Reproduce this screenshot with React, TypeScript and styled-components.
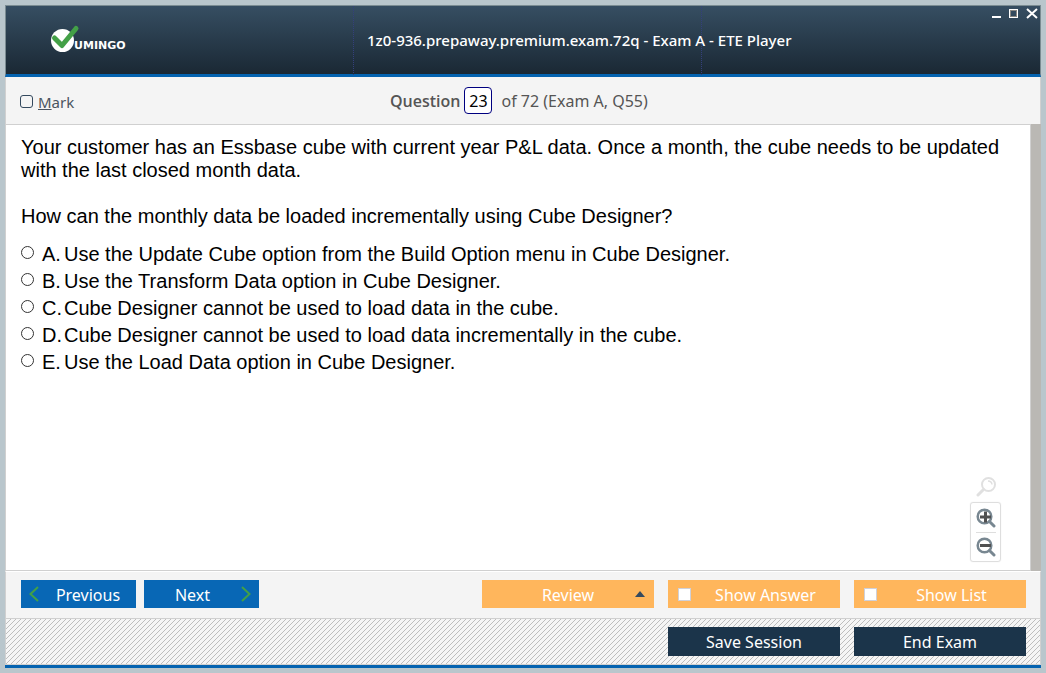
import React, { useState } from "react";
import styled, { createGlobalStyle, css } from "styled-components";

const uiFont = '"Noto Sans", "Open Sans", sans-serif';

const hatchTile = encodeURIComponent(
  '<svg xmlns="http://www.w3.org/2000/svg" width="5" height="5" fill="#bdbdbd" shape-rendering="crispEdges"><path d="M4 0h1v1h-1zM3 1h1v1h-1zM2 2h1v1h-1zM1 3h1v1h-1zM0 4h1v1h-1z"/></svg>'
);

const GlobalStyle = createGlobalStyle`
  *, *::before, *::after { box-sizing: border-box; }
  body { margin: 0; background: #b9c6cc; font-family: ${uiFont}; }
  button, input { font: inherit; margin: 0; }
`;

const Desktop = styled.div`
  display: flex;
  min-height: 100vh;
  padding: 5px;
`;

const Window = styled.div`
  flex: 1;
  min-width: 0;
  display: flex;
  flex-direction: column;
  border-bottom: 3px solid #0463b0;
`;

const TitleBar = styled.header`
  display: grid;
  grid-template-columns: 348px 348px minmax(0, 1fr);
  height: 72px;
  border: 1px solid #7b8c92;
  border-bottom: 3px solid #0463b0;
  background: linear-gradient(#364e62, #1a2834);
`;

const LogoCell = styled.div`
  padding: 18px 0 0 42px;
  border-right: 1px dotted #34407c;
`;

const Title = styled.h1`
  margin: 0;
  padding-left: 13px;
  border-right: 1px dotted #34407c;
  white-space: nowrap;
  font-size: 15px;
  font-weight: 500;
  line-height: 69px;
  color: #fff;
`;

const WindowControls = styled.div`
  display: flex;
  justify-content: flex-end;
  align-items: flex-start;
  gap: 4px;
  padding: 1px 1px 0 0;
`;

const ControlButton = styled.button`
  display: flex;
  padding: 0;
  border: 0;
  background: none;
`;

const InfoBar = styled.div`
  display: grid;
  grid-template-columns: 384px 1fr;
  align-items: center;
  height: 48px;
  border: 1px solid #d0d0d0;
  border-top: 0;
  background: #f4f4f4;
  color: #555;
  font-size: 16px;
`;

const MarkLabel = styled.label`
  display: flex;
  align-items: center;
  gap: 5px;
  padding: 2px 0 0 14px;
  color: #4a5560;
  font-size: 15px;
`;

const MarkBox = styled.input`
  appearance: none;
  width: 13px;
  height: 13px;
  border: 1px solid #34495e;
  border-radius: 3px;
  &:checked { background: #34495e; }
`;

const Position = styled.div`
  display: flex;
  align-items: center;
  gap: 4px;
  white-space: nowrap;
`;

const QuestionLabel = styled.label`
  font-family: "Open Sans", "Noto Sans", sans-serif;
  font-weight: 600;
`;

const NumberInput = styled.input`
  width: 28px;
  height: 27px;
  margin-right: 5px;
  padding: 0;
  border: 1px solid #000080;
  border-radius: 4px;
  background: #fff;
  color: #000;
  text-align: center;
`;

const ContentRow = styled.div`
  flex: 1;
  display: flex;
  border-left: 1px solid #d0d0d0;
`;

const Content = styled.main`
  flex: 1;
  min-width: 0;
  display: flex;
  flex-direction: column;
  justify-content: space-between;
  padding: 11px 29px 8px 15px;
  border-right: 1px solid #d0d0d0;
  border-bottom: 1px solid #d0d0d0;
  background: #fff;
  color: #000;
  font-family: "Liberation Sans", Arial, sans-serif;
  font-size: 20px;
  line-height: 23px;
`;

const ScrollTrack = styled.div`
  width: 10px;
  margin-top: -1px;
  background: #bab8b4;
`;

const Paragraph = styled.p`
  margin: 0 0 23px;
`;

const Choices = styled.fieldset`
  margin: -10px 0 0;
  padding: 0;
  border: 0;
`;

const Choice = styled.label`
  display: grid;
  grid-template-columns: 21px 22px 1fr;
  line-height: 27px;
`;

const Radio = styled.input`
  appearance: none;
  width: 13px;
  height: 13px;
  margin-top: 5px !important;
  border: 1px solid #333;
  border-radius: 50%;
  background: #fff;
  &:checked { background: radial-gradient(#222 40%, #fff 45%); }
`;

const ZoomTools = styled.div`
  align-self: flex-end;
  display: flex;
  flex-direction: column;
  align-items: center;
  gap: 5px;
`;

const ZoomPanel = styled.div`
  display: flex;
  flex-direction: column;
  align-items: center;
  width: 31px;
  border: 1px solid #dedede;
  border-radius: 3px;
  box-shadow: 0 0 1px #ddd;
`;

const ZoomButton = styled.button`
  display: flex;
  align-items: center;
  justify-content: center;
  width: 20px;
  height: 29px;
  padding: 0;
  border: 0;
  background: none;
  & + & { border-top: 1px solid #dedede; }
`;

const Actions = styled.div`
  display: flex;
  gap: 8px;
  height: 48px;
  padding: 8px 14px 0 15px;
  border: 1px solid #d0d0d0;
  border-top: 1px solid #fff;
  background: #f4f4f4;
`;

const Footer = styled.footer`
  display: flex;
  justify-content: flex-end;
  gap: 14px;
  height: 46px;
  padding: 8px 14px 0 15px;
  border: 1px solid #d0d0d0;
  border-top: 0;
  background: #f5f5f5 url("data:image/svg+xml,${hatchTile}");
`;

const buttonBase = css`
  position: relative;
  display: flex;
  align-items: center;
  justify-content: center;
  height: 28px;
  padding: 0;
  border: 0;
  color: #fff;
  font-size: 16px;
  line-height: 30px;
  white-space: nowrap;
`;

const NavButton = styled.button<{ $dir: "back" | "forward" }>`
  ${buttonBase}
  flex-direction: ${(p) => (p.$dir === "back" ? "row" : "row-reverse")};
  justify-content: flex-start;
  width: 115px;
  padding: 0 8px;
  background: #0867b5;
`;

const NavText = styled.span<{ $dir: "back" | "forward" }>`
  flex: 1;
  padding-top: 2px;
  text-align: center;
  ${(p) => (p.$dir === "back" ? "padding-left: 9px;" : "padding-right: 8px;")}
`;

const OptionGroup = styled.div`
  display: flex;
  gap: 14px;
  margin-left: auto;
`;

const OrangeButton = styled.button`
  ${buttonBase}
  width: 172px;
  padding-top: 2px;
  background: #ffb65c;
`;

const OrangeToggle = styled.label`
  ${buttonBase}
  width: 172px;
  padding-left: 10px;
  background: #ffb65c;
`;

const ToggleText = styled.span`
  flex: 1;
  padding-top: 2px;
  text-align: center;
`;

const ToggleBox = styled.input`
  appearance: none;
  width: 13px;
  height: 13px;
  border: 1px solid #d0d0d8;
  background: #fff;
  &:checked { background: #1b344a; }
`;

const Caret = styled.span`
  position: absolute;
  top: 11px;
  right: 9px;
  border: 5px solid transparent;
  border-top: 0;
  border-bottom: 6px solid #34495e;
`;

const DarkButton = styled.button`
  ${buttonBase}
  width: 172px;
  height: 29px;
  background: #1b344a;
`;

const LogoText = styled.text`
  font-family: "DejaVu Sans", sans-serif;
  font-weight: 700;
  font-size: 11px;
  fill: #fff;
`;

const Logo = () => (
  <svg width="84" height="32" viewBox="0 0 84 32" role="img" aria-label="Vumingo">
    <circle cx="14.500" cy="16.500" r="11.500" fill="#fff" />
    <path d="M6.500 14 L14 21.500 L28 4.500" fill="none" stroke="#43a047" strokeWidth="5" strokeLinecap="round" strokeLinejoin="round" />
    <LogoText x="26" y="25">UMINGO</LogoText>
  </svg>
);

const Chevron = ({ dir }: { dir: "back" | "forward" }) => (
  <svg width="10" height="16" viewBox="0 0 10 16" fill="none" stroke="#43a047" strokeWidth="2">
    <path d={dir === "back" ? "M9 1 L1.500 8 L9 15" : "M1 1 L8.500 8 L1 15"} />
  </svg>
);

const Magnifier = ({ sign }: { sign: "plus" | "minus" }) => (
  <svg width="20" height="20" viewBox="0 0 20 20" fill="none">
    <circle cx="8.500" cy="8.500" r="6.800" stroke="#788791" strokeWidth="2.500" />
    <path d="M13.500 13.500 L18 18" stroke="#788791" strokeWidth="3" strokeLinecap="round" />
    <path d={sign === "plus" ? "M4 9 H15 M9.500 3.500 V14.500" : "M4 8.500 H15"} stroke="#505050" strokeWidth="3" />
  </svg>
);

const choices = [
  ["A", "Use the Update Cube option from the Build Option menu in Cube Designer."],
  ["B", "Use the Transform Data option in Cube Designer."],
  ["C", "Cube Designer cannot be used to load data in the cube."],
  ["D", "Cube Designer cannot be used to load data incrementally in the cube."],
  ["E", "Use the Load Data option in Cube Designer."],
];

export default function App() {
  const [number, setNumber] = useState("23");
  return (
    <Desktop>
      <GlobalStyle />
      <Window>
        <TitleBar>
          <LogoCell><Logo /></LogoCell>
          <Title>1z0-936.prepaway.premium.exam.72q - Exam A - ETE Player</Title>
          <WindowControls>
            <ControlButton aria-label="Minimize">
              <svg width="14" height="14"><path d="M3 10 H12" stroke="#fff" strokeWidth="2" /></svg>
            </ControlButton>
            <ControlButton aria-label="Maximize">
              <svg width="14" height="14" fill="none">
                <rect x="2.500" y="2.500" width="8" height="8" stroke="#fff" />
                <rect x="3.500" y="3.500" width="6" height="6" stroke="#8a8782" />
              </svg>
            </ControlButton>
            <ControlButton aria-label="Close">
              <svg width="14" height="14"><path d="M2 2 L12 11 M12 2 L2 11" stroke="#fff" strokeWidth="2" /></svg>
            </ControlButton>
          </WindowControls>
        </TitleBar>
        <InfoBar>
          <MarkLabel>
            <MarkBox type="checkbox" />
            <span><u>M</u>ark</span>
          </MarkLabel>
          <Position>
            <QuestionLabel htmlFor="number">Question</QuestionLabel>
            <NumberInput id="number" value={number} onChange={(e) => setNumber(e.target.value)} />
            <span>of 72 (Exam A, Q55)</span>
          </Position>
        </InfoBar>
        <ContentRow>
          <Content>
            <div>
              <Paragraph>
                Your customer has an Essbase cube with current year P&amp;L data. Once a month, the cube needs to be updated with the last closed month data.
              </Paragraph>
              <Paragraph>How can the monthly data be loaded incrementally using Cube Designer?</Paragraph>
              <Choices aria-label="Answers">
                {choices.map(([letter, text]) => (
                  <Choice key={letter}>
                    <Radio type="radio" name="answer" value={letter} />
                    <span>{letter}.</span>
                    <span>{text}</span>
                  </Choice>
                ))}
              </Choices>
            </div>
            <ZoomTools>
              <svg width="20" height="20" viewBox="0 0 20 20" fill="none" stroke="#e0e0e0">
                <circle cx="12.500" cy="7.500" r="6.500" strokeWidth="2" />
                <path d="M7.500 12.500 L2 18" strokeWidth="3" strokeLinecap="round" />
                <path d="M12 4 Q15.500 4 16 7.500" strokeWidth="1.500" />
              </svg>
              <ZoomPanel>
                <ZoomButton aria-label="Zoom in"><Magnifier sign="plus" /></ZoomButton>
                <ZoomButton aria-label="Zoom out"><Magnifier sign="minus" /></ZoomButton>
              </ZoomPanel>
            </ZoomTools>
          </Content>
          <ScrollTrack />
        </ContentRow>
        <Actions>
          <NavButton $dir="back"><Chevron dir="back" /><NavText $dir="back">Previous</NavText></NavButton>
          <NavButton $dir="forward"><Chevron dir="forward" /><NavText $dir="forward">Next</NavText></NavButton>
          <OptionGroup>
            <OrangeButton>Review<Caret /></OrangeButton>
            <OrangeToggle><ToggleBox type="checkbox" /><ToggleText>Show Answer</ToggleText></OrangeToggle>
            <OrangeToggle><ToggleBox type="checkbox" /><ToggleText>Show List</ToggleText></OrangeToggle>
          </OptionGroup>
        </Actions>
        <Footer>
          <DarkButton>Save Session</DarkButton>
          <DarkButton>End Exam</DarkButton>
        </Footer>
      </Window>
    </Desktop>
  );
}
